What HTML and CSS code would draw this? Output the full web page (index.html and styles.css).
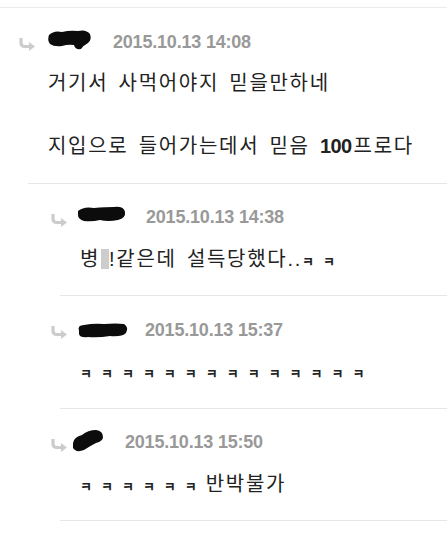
FILE: index.html
```html
<!DOCTYPE html>
<html lang="ko">
<head>
    <meta charset="UTF-8">
    <meta name="viewport" content="width=device-width, initial-scale=1.0">
    <title>댓글</title>
    <link rel="stylesheet" href="styles.css">
</head>
<body>
<div class="thread">

    <!-- 댓글 1 -->
    <div class="comment">
        <div class="comment-head">
            <svg class="reply-icon" viewBox="0 0 17 12"><path d="M3 0 V5 Q3 8.5 7 8.5 H12" /><polygon points="11,4 17,8.5 11,13" /></svg>
            <svg class="name-mask" width="44" height="24"><path d="M1 5 Q6 0 14 2 Q22 0 30 1 Q38 -1 42 4 Q44 10 40 13 Q36 15 33 19 Q27 20 26 15 Q20 14 14 16 Q6 17 2 14 Q-1 10 1 5 Z" /></svg>
            <span class="date">2015.10.13 14:08</span>
        </div>
        <div class="comment-body">거기서 사먹어야지 믿을만하네<br><br>지입으로 들어가는데서 믿음 <span class="num">100</span>프로다</div>
    </div>

    <!-- 답글 -->
    <div class="comment reply">
        <div class="comment-head">
            <svg class="reply-icon" viewBox="0 0 17 12"><path d="M3 0 V5 Q3 8.5 7 8.5 H12" /><polygon points="11,4 17,8.5 11,13" /></svg>
            <svg class="name-mask" width="45" height="24"><path d="M-2 5 Q4 0 14 2 Q26 1 34 1 Q44 0 45 6 Q46 12 38 14 Q28 16 20 14 Q12 16 4 15 Q-2 13 -2 9 Z" /></svg>
            <span class="date">2015.10.13 14:38</span>
        </div>
        <div class="comment-body">병<span class="censor"></span>!같은데 설득당했다..<span class="kk">ㅋㅋ</span></div>
    </div>

    <div class="comment reply">
        <div class="comment-head">
            <svg class="reply-icon" viewBox="0 0 17 12"><path d="M3 0 V5 Q3 8.5 7 8.5 H12" /><polygon points="11,4 17,8.5 11,13" /></svg>
            <svg class="name-mask" width="44" height="24"><path d="M-1 13 Q-3 7 4 7 Q14 5 24 6 Q36 5 44 6 Q49 9 46 15 Q42 19 30 18 Q18 20 8 19 Q0 20 -1 16 Z" /></svg>
            <span class="date">2015.10.13 15:37</span>
        </div>
        <div class="comment-body"><span class="kk">ㅋㅋㅋㅋㅋㅋㅋㅋㅋㅋㅋㅋㅋㅋ</span></div>
    </div>

    <div class="comment reply">
        <div class="comment-head">
            <svg class="reply-icon" viewBox="0 0 17 12"><path d="M3 0 V5 Q3 8.5 7 8.5 H12" /><polygon points="11,4 17,8.5 11,13" /></svg>
            <svg class="name-mask" width="24" height="24"><path d="M-7 12 Q-6 6 2 4 Q8 -1 16 -1 Q23 0 23 6 Q23 10 16 12 Q10 15 4 19 Q-4 22 -7 17 Z" /></svg>
            <span class="date">2015.10.13 15:50</span>
        </div>
        <div class="comment-body"><span class="kk">ㅋㅋㅋㅋㅋㅋ</span>반박불가</div>
    </div>

</div>
</body>
</html>
```

FILE: styles.css
```css
body {
    margin: 0;
    background-color: #fff;
    font-family: "Liberation Sans", "Noto Sans CJK KR", sans-serif;
    color: #222;
}
.thread {
    margin-top: 7px;
    border-top: 1px solid #ebebeb;
}
.comment {
    margin-left: 28px;
    padding: 20px 0;
    border-bottom: 1px solid #e6e6e6;
}
.reply {
    margin-left: 60px;
}
.comment-head {
    display: flex;
    align-items: center;
    height: 28px;
    margin-left: -10px;
}
.reply-icon {
    width: 17px;
    height: 12px;
    margin-top: 4px;
    margin-right: 13px;
    overflow: visible;
}
.reply-icon path {
    fill: none;
    stroke: #cccccc;
    stroke-width: 3.2;
}
.reply-icon polygon {
    fill: #cccccc;
}
.name-mask {
    overflow: visible;
    flex-shrink: 0;
}
.name-mask path {
    fill: #0c0c0c;
}
.date {
    margin-left: 21px;
    font-weight: bold;
    font-size: 18px;
    letter-spacing: -0.2px;
    color: #999;
}
.comment-body {
    margin-top: 12px;
    padding-left: 20px;
    font-size: 20px;
    line-height: 31.5px;
    letter-spacing: 1.7px;
    word-spacing: 3px;
    white-space: nowrap;
}
.num {
    font-weight: bold;
    letter-spacing: -0.6px;
    margin-right: 2px;
}
.censor {
    display: inline-block;
    width: 8px;
    height: 20px;
    margin-left: 1px;
    vertical-align: -3px;
    background-color: #cdcdcd;
}
.kk {
    font-family: "Noto Sans CJK KR", sans-serif;
    font-size: 13px;
    line-height: 0;
    letter-spacing: 9px;
    font-weight: bold;
}
```
